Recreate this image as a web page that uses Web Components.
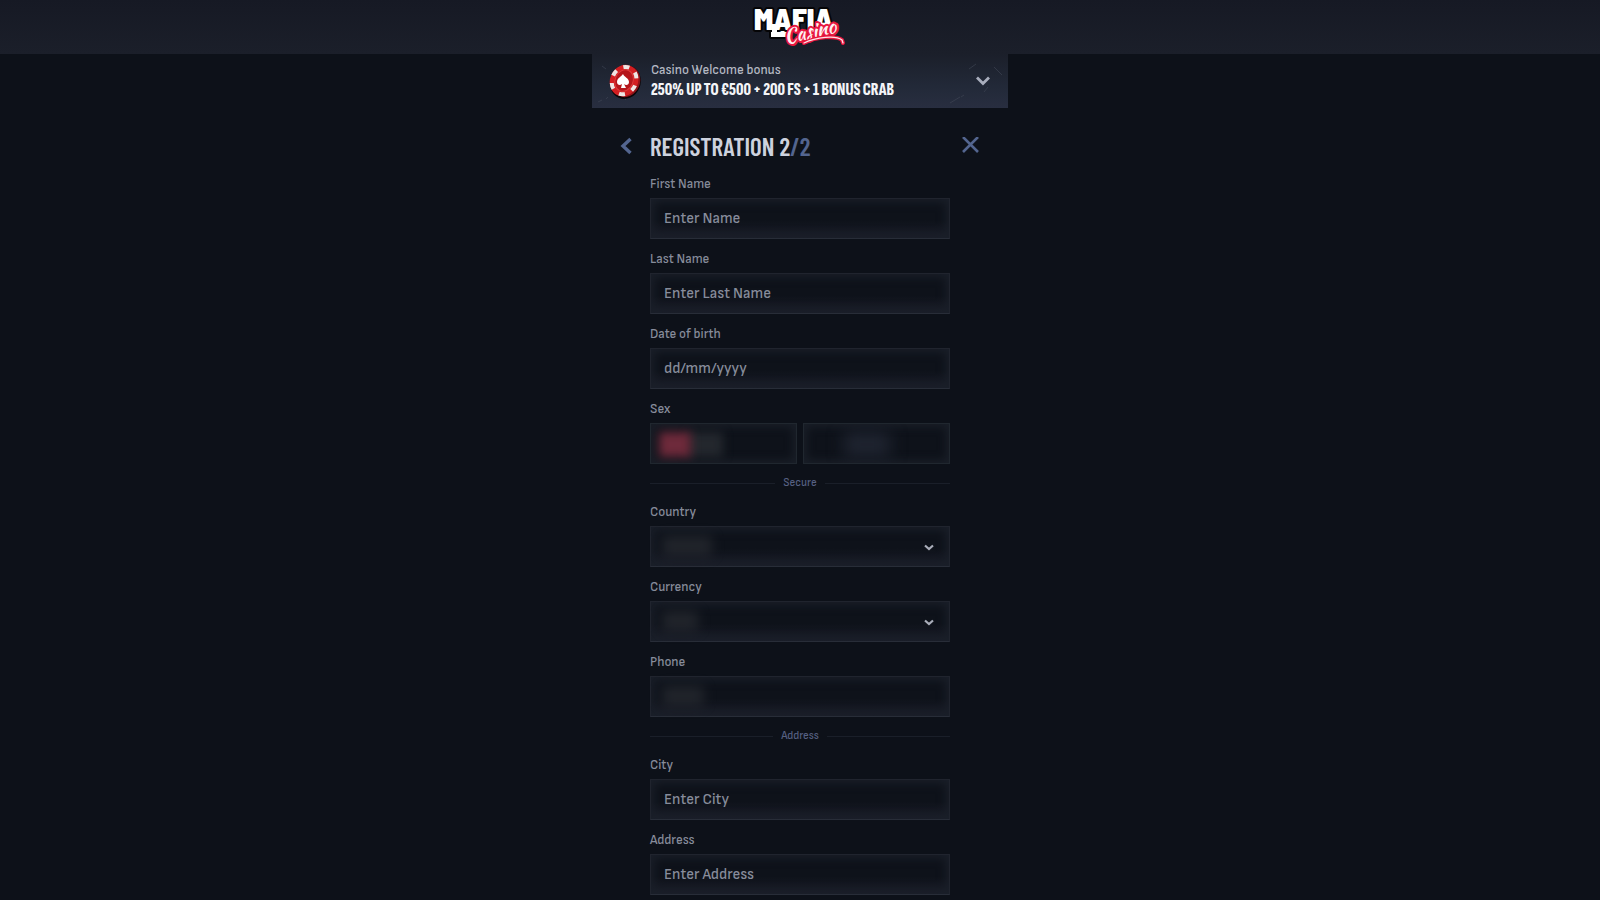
<!DOCTYPE html>
<html lang="en">
<head>
<meta charset="utf-8">
<title>Mafia Casino – Registration</title>
<style>
  html { background: #0d1119; }
  body {
    margin: 0; color: #878c9b;
    --text: "Sofia Sans", Roboto, "Liberation Sans", sans-serif;
    --display: "Sofia Sans Extra Condensed", "Barlow Condensed", Roboto, sans-serif;
    --heading: "Barlow Condensed", Roboto, sans-serif;
    font-family: var(--text); font-weight: 500;
  }
</style>
</head>
<body>
<registration-page></registration-page>

<script>
const define = (name, html, setup) => {
  const template = document.createElement('template');
  template.innerHTML = html;
  customElements.define(name, class extends HTMLElement {
    constructor() {
      super();
      this.attachShadow({ mode: 'open' }).append(template.content.cloneNode(true));
    }
    connectedCallback() { if (setup) setup(this, this.shadowRoot); }
  });
};

const control = `
  :host { display: block; }
  label { display: block; font-size: 13px; line-height: 20px; margin-bottom: 4px; }
  .box { position: relative; }
  input, select {
    display: block; box-sizing: border-box; width: 100%; height: 41px; margin: 0; padding: 0 13px;
    border: 1px solid #20242e; border-bottom-color: #282d38; border-radius: 0; outline: 0;
    background: linear-gradient(#0e121a 55%, #1b1e29);
    box-shadow: inset 0 0 10px 3px #1a1f29;
    font: 500 15px var(--text); color: #878c9b; appearance: none;
  }
  input::placeholder { color: #878c9b; opacity: 1; }
  input:focus-visible, select:focus-visible { border-color: #53658f; }
  .mask {
    position: absolute; top: 10px; left: 12px; width: var(--mask-width, 0); height: 20px;
    background: #2b2e34; filter: blur(6px); opacity: .65; pointer-events: none;
  }`;

define('site-logo', `
  <style>
    :host { display: block; }
    a, svg { display: block; }
    svg { overflow: visible; }
    .block { font: 900 30px "Barlow Semi Condensed", Roboto, sans-serif; }
    .script { font: 20px "Kaushan Script", "Liberation Serif", serif; }
  </style>
  <a href="#" aria-label="Mafia Casino">
    <svg width="92" height="46" viewBox="0 0 92 46">
      <g fill="#fff" stroke="#050507" stroke-width="4" stroke-linejoin="round" paint-order="stroke">
        <path d="M17 20h7v7h12v6H17z"/>
        <text class="block" x="0" y="26">MAFIA</text>
        <path d="M18 20h5v8h12v4H18z" stroke="none"/>
      </g>
      <g transform="rotate(-13 32 41)">
        <text class="script" x="32" y="40" fill="#fff0f2" stroke="#e8173f" stroke-width="4" stroke-linejoin="round" paint-order="stroke">Casino</text>
      </g>
      <path d="M50 39c12-6 32-8 38-3l1 3" fill="none" stroke="#e8173f" stroke-width="4" stroke-linecap="round"/>
      <path d="M50 39c12-6 32-8 38-3l1 3" fill="none" stroke="#ffe3e8" stroke-width="1.300" stroke-linecap="round"/>
    </svg>
  </a>`);

define('site-header', `
  <style>
    :host { display: flex; justify-content: center; box-sizing: border-box; height: 54px; padding-top: 4px;
      background: linear-gradient(#161924, #1b1f2a); }
  </style>
  <slot></slot>`);

define('casino-chip', `
  <style>:host, svg { display: block; }</style>
  <svg width="34" height="38" viewBox="0 0 34 38" aria-hidden="true">
    <g transform="rotate(24 17 19)">
      <ellipse cx="18" cy="20" rx="15" ry="17" fill="#0b0608"/>
      <ellipse cx="18" cy="19" rx="14" ry="16" fill="#8f1218"/>
      <ellipse cx="16" cy="19" rx="14" ry="16" fill="#d31f22"/>
      <ellipse cx="16" cy="19" rx="12" ry="14" fill="none" stroke="#eee6e4" stroke-width="4" stroke-dasharray="6 7.600"/>
      <ellipse cx="16" cy="19" rx="9" ry="11" fill="#b5161b" stroke="#dd3a3b"/>
    </g>
    <path d="M15 12c1 3 6 4 6 8 0 3-3 4-5 2l2 4h-5l1-4c-2 2-5 1-5-2 0-4 4-5 6-8z" fill="#fff"/>
  </svg>`);

define('bonus-banner', `
  <style>
    :host { display: block; }
    button {
      display: flex; align-items: center; box-sizing: border-box; width: 100%; height: 54px; margin: 0;
      padding: 0 16px; gap: 9px; border: 0; text-align: left; cursor: pointer; color: #f4f5f8;
      position: relative; overflow: hidden; font-family: inherit;
      background: linear-gradient(#1b1f2a, #222938 60%, #282e40);
    }
    .texture { position: absolute; inset: 0; width: 100%; height: 100%; }
    .chip, .copy, .arrow { position: relative; }
    .copy { flex: 1; display: block; }
    .kicker { display: block; font-size: 13px; line-height: 18px; font-weight: 500; color: #b6bac4; }
    .offer { display: block; font: 800 18px/22px var(--display); white-space: nowrap; }
    .arrow { display: block; margin-right: 2px; }
  </style>
  <button type="button" aria-expanded="false">
    <svg class="texture" viewBox="0 0 416 54" preserveAspectRatio="none" aria-hidden="true">
      <g stroke="#414756" stroke-width="1" opacity=".6">
        <path d="M402 13l8 8M358 49l10-6M369 43l3-2M6 48l4-2M14 45l2-2M32 44l2 2M10 12l4 3M377 15l7-5M392 38l4-5"/>
      </g>
    </svg>
    <casino-chip class="chip"></casino-chip>
    <span class="copy">
      <span class="kicker"><slot name="kicker"></slot></span>
      <span class="offer"><slot name="offer"></slot></span>
    </span>
    <svg class="arrow" width="14" height="10" viewBox="0 0 14 10" aria-hidden="true">
      <path d="M1 1.500l6 6 6-6" fill="none" stroke="#a9aebd" stroke-width="2.800"/>
    </svg>
  </button>`);

define('form-heading', `
  <style>
    :host { display: flex; align-items: center; height: 32px; }
    button { display: flex; padding: 0; border: 0; background: none; cursor: pointer; }
    .back { width: 30px; }
    h1 { flex: 1; margin: 0; font: 600 25px/32px var(--heading); color: #cdd2de; }
    .total { color: #53658f; }
    svg { display: block; }
  </style>
  <button class="back" type="button" aria-label="Back">
    <svg width="12" height="18" viewBox="0 0 12 18"><path d="M10.500 2L3 9l7.500 7" fill="none" stroke="#53658f" stroke-width="3.400"/></svg>
  </button>
  <h1><slot></slot><span class="total"><slot name="total"></slot></span></h1>
  <button type="button" aria-label="Close">
    <svg width="18" height="18" viewBox="0 0 18 18"><path d="M1 0l15 15m0-15l-15 15" fill="none" stroke="#53658f" stroke-width="2.600"/></svg>
  </button>`);

define('text-field', `
  <style>${control}</style>
  <label for="control"></label>
  <div class="box"><input id="control" type="text"><span class="mask"></span></div>`,
  (host, root) => {
    root.querySelector('label').textContent = host.getAttribute('label');
    const input = root.querySelector('input');
    input.type = host.getAttribute('type') || 'text';
    input.placeholder = host.getAttribute('placeholder') || '';
  });

define('select-field', `
  <style>${control}
    svg { position: absolute; right: 16px; top: 18px; pointer-events: none; }
  </style>
  <label for="control"></label>
  <div class="box">
    <select id="control"><option value=""></option></select>
    <span class="mask"></span>
    <svg width="10" height="7" viewBox="0 0 10 7" aria-hidden="true"><path d="M1 1.500l4 3.500 4-3.500" fill="none" stroke="#a9adb9" stroke-width="2.200"/></svg>
  </div>`,
  (host, root) => { root.querySelector('label').textContent = host.getAttribute('label'); });

define('sex-field', `
  <style>
    :host { display: block; }
    fieldset { margin: 0; padding: 0; border: 0; min-width: 0; }
    legend { padding: 0; margin-bottom: 4px; font-size: 13px; line-height: 20px; }
    .options { display: grid; grid-template-columns: 1fr 1fr; gap: 6px; }
    label {
      position: relative; box-sizing: border-box; height: 41px; border: 1px solid #20272f; overflow: hidden;
      background: #0e121a; box-shadow: inset 0 0 8px 3px #1a1f28; cursor: pointer;
    }
    input { position: absolute; inset: 0; width: 100%; height: 100%; margin: 0; opacity: 0; }
    .blob { position: absolute; top: 8px; height: 25px; filter: blur(5px); }
    .red { left: 8px; width: 32px; background: #6e2a3b; }
    .grey { left: 36px; width: 36px; background: #23272d; }
    .dim { left: 40px; width: 46px; background: #1f2430; filter: blur(8px); }
  </style>
  <fieldset>
    <legend>Sex</legend>
    <div class="options">
      <label><input type="radio" name="sex" value="m" aria-label="Male" checked><span class="blob grey"></span><span class="blob red"></span></label>
      <label><input type="radio" name="sex" value="f" aria-label="Female"><span class="blob dim"></span></label>
    </div>
  </fieldset>`);

define('section-divider', `
  <style>
    :host { display: flex; align-items: center; gap: 8px; font-size: 11px; line-height: 18px; color: #566082; }
    :host::before, :host::after { content: ""; flex: 1; height: 1px; background: #1a1f29; }
  </style>
  <slot></slot>`);

define('registration-page', `
  <style>
    :host { display: block; }
    main { width: min(100%, 416px); margin: 0 auto; }
    form-heading { margin: 22px 28px 12px; }
    form { display: grid; gap: 10px; margin: 0 58px; padding-bottom: 4px; }
    .country { --mask-width: 50px; }
    .currency { --mask-width: 36px; }
    .phone { --mask-width: 42px; }
  </style>
  <site-header><site-logo></site-logo></site-header>
  <main>
    <bonus-banner>
      <span slot="kicker">Casino Welcome bonus</span>
      <span slot="offer">250% UP TO €500 + 200 FS + 1 BONUS CRAB</span>
    </bonus-banner>
    <form-heading>REGISTRATION 2<span slot="total">/2</span></form-heading>
    <form>
      <text-field label="First Name" placeholder="Enter Name"></text-field>
      <text-field label="Last Name" placeholder="Enter Last Name"></text-field>
      <text-field label="Date of birth" placeholder="dd/mm/yyyy"></text-field>
      <sex-field></sex-field>
      <section-divider>Secure</section-divider>
      <select-field class="country" label="Country"></select-field>
      <select-field class="currency" label="Currency"></select-field>
      <text-field class="phone" label="Phone" type="tel"></text-field>
      <section-divider>Address</section-divider>
      <text-field label="City" placeholder="Enter City"></text-field>
      <text-field label="Address" placeholder="Enter Address"></text-field>
    </form>
  </main>`);
</script>
</body>
</html>
